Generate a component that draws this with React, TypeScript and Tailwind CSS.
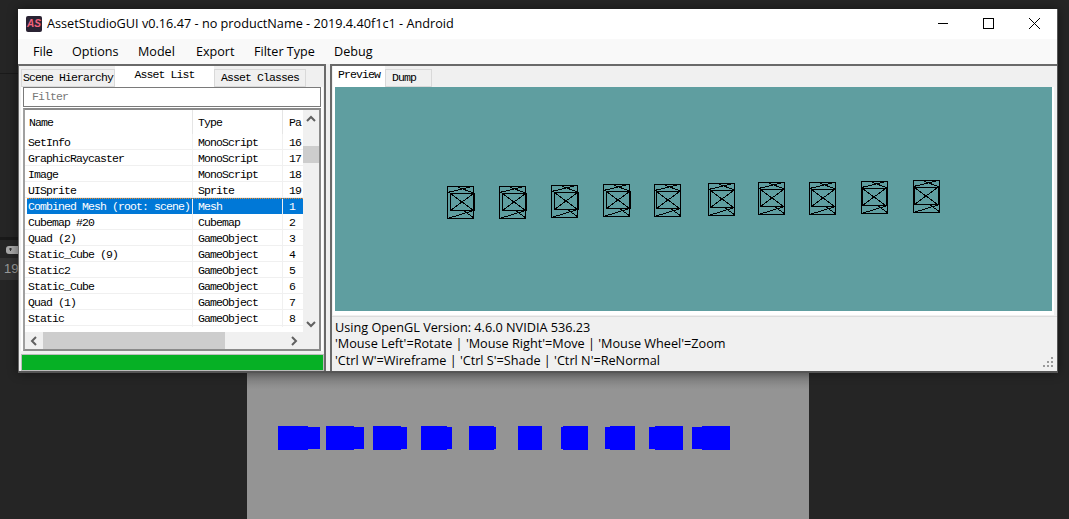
const rows = [
  ["SetInfo", "MonoScript", "16"],
  ["GraphicRaycaster", "MonoScript", "17"],
  ["Image", "MonoScript", "18"],
  ["UISprite", "Sprite", "19"],
  ["Combined Mesh (root: scene)", "Mesh", "1"],
  ["Cubemap #20", "Cubemap", "2"],
  ["Quad (2)", "GameObject", "3"],
  ["Static_Cube (9)", "GameObject", "4"],
  ["Static2", "GameObject", "5"],
  ["Static_Cube", "GameObject", "6"],
  ["Quad (1)", "GameObject", "7"],
  ["Static", "GameObject", "8"],
];

const menu = [
  ["File", "w-[39px]"],
  ["Options", "w-[66px]"],
  ["Model", "w-[58px]"],
  ["Export", "w-[58px]"],
  ["Filter Type", "w-[80px]"],
  ["Debug", "w-[60px]"],
];

// top-left of every wireframe cube, relative to the GL canvas; o shifts the inner box
const cubes = [
  [111, 98, 1],
  [163, 98, 1],
  [215, 97, 1],
  [267, 96, 1],
  [318, 96, 0],
  [372, 95, 0],
  [422, 94, 0],
  [473, 94, 0],
  [525, 93, -1],
  [577, 92, -1],
];

// blue boxes in the game view behind the window, [x, width, x2, width2]
const boxes = [
  [31, 30, 61, 12],
  [79, 28, 107, 10],
  [126, 28, 154, 6],
  [174, 26, 200, 5],
  [222, 25, 247, 2],
  [271, 24, 271, 24],
  [316, 25, 314, 2],
  [363, 25, 358, 5],
  [408, 28, 402, 6],
  [455, 28, 445, 10],
];

function Cube({ x, y, o }: { x: number; y: number; o: number }) {
  return (
    <g transform={`translate(${x} ${y})`}>
      <path d="M1.5 1.5H27.5V33.5H1.5Z" />
      <path d={`M${3.5 + o} 8.5H${27.5 + o}M${3.5 + o} 25.5H${27.5 + o}M${3.5 + o} 8.5V25.5M${27.5 + o} 8.5V25.5`} />
      <path d={`M${3.5 + o} 8.5L${26.5 + o} 25.5M${26.5 + o} 8.5L${3.5 + o} 25.5`} />
      <path d="M1.5 7.5L26.5 1.5M10.5 1.5L28.5 8.5M1.5 33.5L27.5 25.5M17.5 25.5L28.5 33.5" />
    </g>
  );
}

function Chevron({ d }: { d: string }) {
  return (
    <svg width="10" height="10" viewBox="0 0 10 10" fill="none" stroke="#606060" strokeWidth="2">
      <path d={d} />
    </svg>
  );
}

function Tab({ label, active, className }: { label: string; active?: boolean; className: string }) {
  return (
    <div
      className={
        active
          ? `flex items-center justify-center bg-white text-black ${className}`
          : `flex items-center justify-center border border-[#d9d9d9] bg-[#f0f0f0] text-black ${className}`
      }
    >
      {label}
    </div>
  );
}

export default function App() {
  return (
    <div className="relative h-[519px] w-[1069px] overflow-hidden bg-[#252525]">
      {/* what shows of the editor behind */}
      <div className="absolute left-0 top-[73px] h-px w-[18px] bg-[#1a1a1a]" />
      <div className="absolute left-0 top-[237px] h-[3px] w-[18px] bg-[#191919]" />
      <svg className="absolute left-[6px] top-[245px]" width="12" height="10" viewBox="0 0 12 10">
        <rect x="0" y="1" width="14" height="8" rx="3" fill="#a8a8a8" />
        <path d="M3 4h3M4.5 3v3" stroke="#333" strokeWidth="1" />
      </svg>
      <div className="absolute left-0 top-[258px] flex h-[22px] w-[18px] items-center bg-[#333333] pl-[4px] font-['Liberation_Sans',sans-serif] text-[13px] text-[#9a9a9a]">
        19
      </div>

      <div className="ml-[247px] mt-[372px] h-[147px] w-[562px] bg-gradient-to-b from-[#7a7a7a] to-[#949494] to-[12%]">
        <svg width="562" height="147" viewBox="0 0 562 147">
          {boxes.map(([x, w, x2, w2]) => (
            <g key={x} fill="#0000ff">
              <rect x={x} y="54" width={w} height="24" />
              <rect x={x2} y="55" width={w2} height="22" />
            </g>
          ))}
        </svg>
      </div>

      {/* app window */}
      <div className="absolute left-[18px] top-[9px] flex h-[364px] w-[1040px] flex-col border-b-2 border-r border-[#555555] bg-[#f0f0f0] shadow-[0_0_10px_rgba(0,0,0,0.45)] font-['Open_Sans',sans-serif] text-black">
        <div className="flex h-[30px] shrink-0 items-center bg-white pl-[8px] text-[12.7px]">
          <div className="flex h-[16px] w-[16px] items-center justify-center rounded-[2px] bg-[#2a2333] font-['Liberation_Sans',sans-serif] text-[10px] font-bold italic leading-none text-[#f2637e]">
            AS
          </div>
          <div className="ml-[5px] whitespace-nowrap">AssetStudioGUI v0.16.47 - no productName - 2019.4.40f1c1 - Android</div>
          <div className="ml-auto flex items-center">
            <svg width="140" height="30" viewBox="0 0 140 30" fill="none" stroke="#000" strokeWidth="1" shapeRendering="crispEdges">
              <path d="M21 14.5H31" />
              <rect x="66.5" y="9.5" width="10" height="10" />
              <path d="M112 9L123 20M123 9L112 20" shapeRendering="auto" />
            </svg>
          </div>
        </div>

        <div className="flex h-[25px] shrink-0 items-center bg-[#f9f9f9] pl-[15px] pt-[1px] text-[12.6px]">
          {menu.map(([label, w]) => (
            <div key={label} className={w}>
              {label}
            </div>
          ))}
        </div>

        <div className="flex min-h-0 flex-1 gap-[4px]">
          {/* left pane */}
          <div className="flex w-[308px] flex-col border-l border-r-2 border-t-2 border-[#6a6a6a] pl-[2px] font-['Liberation_Mono',monospace] text-[11.5px] tracking-[-0.9px]">
            <div className="flex h-[21px] shrink-0 items-end">
              <Tab label="Scene Hierarchy" className="h-[18px] w-[94px]" />
              <Tab label="Asset List" active className="h-[21px] w-[99px] pb-[3px]" />
              <Tab label="Asset Classes" className="h-[18px] w-[92px]" />
            </div>
            <div className="mr-[1px] flex h-[264px] shrink-0 flex-col bg-white pl-[2px] pr-[2px]">
              <div className="flex h-[20px] shrink-0 items-center border border-[#7a7a7a] pl-[8px] text-[#777777]">Filter</div>
              <div className="mt-[1px] flex min-h-0 flex-1 flex-col border-2 border-[#8a8a8a] border-l-[#a0a0a0]">
                <div className="flex min-h-0 flex-1">
                  <div className="flex w-[278px] flex-col overflow-hidden">
                    <div className="grid h-[24px] shrink-0 grid-cols-[168px_90px_20px] items-center">
                      <div className="h-full border-r border-[#e5e5e5] pl-[4px] leading-[26px]">Name</div>
                      <div className="h-full border-r border-[#e5e5e5] pl-[5px] leading-[26px]">Type</div>
                      <div className="h-full pl-[6px] leading-[26px]">Pa</div>
                    </div>
                    {rows.map(([name, type, path]) => {
                      const selected = type === "Mesh";
                      return (
                        <div
                          key={name}
                          className={
                            selected
                              ? "ml-[2px] grid h-[16px] shrink-0 grid-cols-[166px_90px_20px] items-center border-t border-dotted border-[#f08a24] bg-[#0078d7] text-white"
                              : "grid h-[16px] shrink-0 grid-cols-[168px_90px_20px] items-center border-b border-[#f0f0f0]"
                          }
                        >
                          <div className={selected ? "h-full overflow-hidden whitespace-nowrap border-r border-[#f0f0f0] pl-[1px] leading-[15px]" : "h-full overflow-hidden whitespace-nowrap border-r border-[#f0f0f0] pl-[3px] leading-[17px]"}>{name}</div>
                          <div className={selected ? "h-full border-r border-[#f0f0f0] pl-[5px] leading-[15px]" : "h-full border-r border-[#f0f0f0] pl-[5px] leading-[17px]"}>{type}</div>
                          <div className={selected ? "h-full overflow-hidden pl-[6px] leading-[15px]" : "h-full overflow-hidden pl-[6px] leading-[17px]"}>{path}</div>
                        </div>
                      );
                    })}
                  </div>
                  <div className="flex w-[16px] flex-col items-center bg-[#f0f0f0]">
                    <div className="flex h-[17px] items-center justify-center">
                      <Chevron d="M1 7L5 3L9 7" />
                    </div>
                    <div className="mt-[19px] h-[17px] w-full bg-[#cdcdcd]" />
                    <div className="mt-auto flex h-[17px] items-center justify-center">
                      <Chevron d="M1 3L5 7L9 3" />
                    </div>
                  </div>
                </div>
                <div className="flex h-[17px] shrink-0 items-center bg-[#f0f0f0]">
                  <div className="flex w-[18px] justify-center">
                    <Chevron d="M7 1L3 5L7 9" />
                  </div>
                  <div className="h-full w-[182px] bg-[#cdcdcd]" />
                  <div className="ml-[60px] flex w-[18px] justify-center">
                    <Chevron d="M3 1L7 5L3 9" />
                  </div>
                </div>
              </div>
            </div>
            <div className="mt-[3px] h-[17px] border border-[#bcbcbc] bg-[#06b025]" />
          </div>

          {/* right pane */}
          <div className="flex min-w-0 flex-1 flex-col border-l-2 border-t-2 border-[#6a6a6a]">
            <div className="flex h-[21px] shrink-0 items-end pl-[1px] font-['Liberation_Mono',monospace] text-[11.5px] tracking-[-0.9px]">
              <Tab label="Preview" active className="h-[21px] w-[52px] pb-[3px]" />
              <Tab label="Dump" className="h-[18px] w-[47px] !justify-start pl-[6px]" />
            </div>
            <div className="ml-[1px] mr-[3px] h-[228px] shrink-0 bg-white pl-[2px] pr-[2px] pb-[3px]">
              <div className="h-[224px] bg-[#5f9ea0]">
                <svg width="717" height="224" viewBox="0 0 717 224" fill="none" stroke="#000" strokeWidth="1" shapeRendering="crispEdges">
                  {cubes.map(([x, y, o]) => (
                    <Cube key={x} x={x} y={y} o={o} />
                  ))}
                </svg>
              </div>
            </div>
            <div className="relative mt-[1px] flex-1 border-t border-[#dcdcdc] pl-[3px] pt-[1.5px] text-[12.7px] leading-[16.5px]">
              <div>Using OpenGL Version: 4.6.0 NVIDIA 536.23</div>
              <div>'Mouse Left'=Rotate | 'Mouse Right'=Move | 'Mouse Wheel'=Zoom</div>
              <div>'Ctrl W'=Wireframe | 'Ctrl S'=Shade | 'Ctrl N'=ReNormal</div>
              <svg className="absolute bottom-[2px] right-[2px]" width="12" height="12" viewBox="0 0 12 12" fill="#9a9a9a">
                <rect x="8" y="0" width="2" height="2" />
                <rect x="4" y="4" width="2" height="2" />
                <rect x="8" y="4" width="2" height="2" />
                <rect x="0" y="8" width="2" height="2" />
                <rect x="4" y="8" width="2" height="2" />
                <rect x="8" y="8" width="2" height="2" />
              </svg>
            </div>
          </div>
        </div>
      </div>
    </div>
  );
}
